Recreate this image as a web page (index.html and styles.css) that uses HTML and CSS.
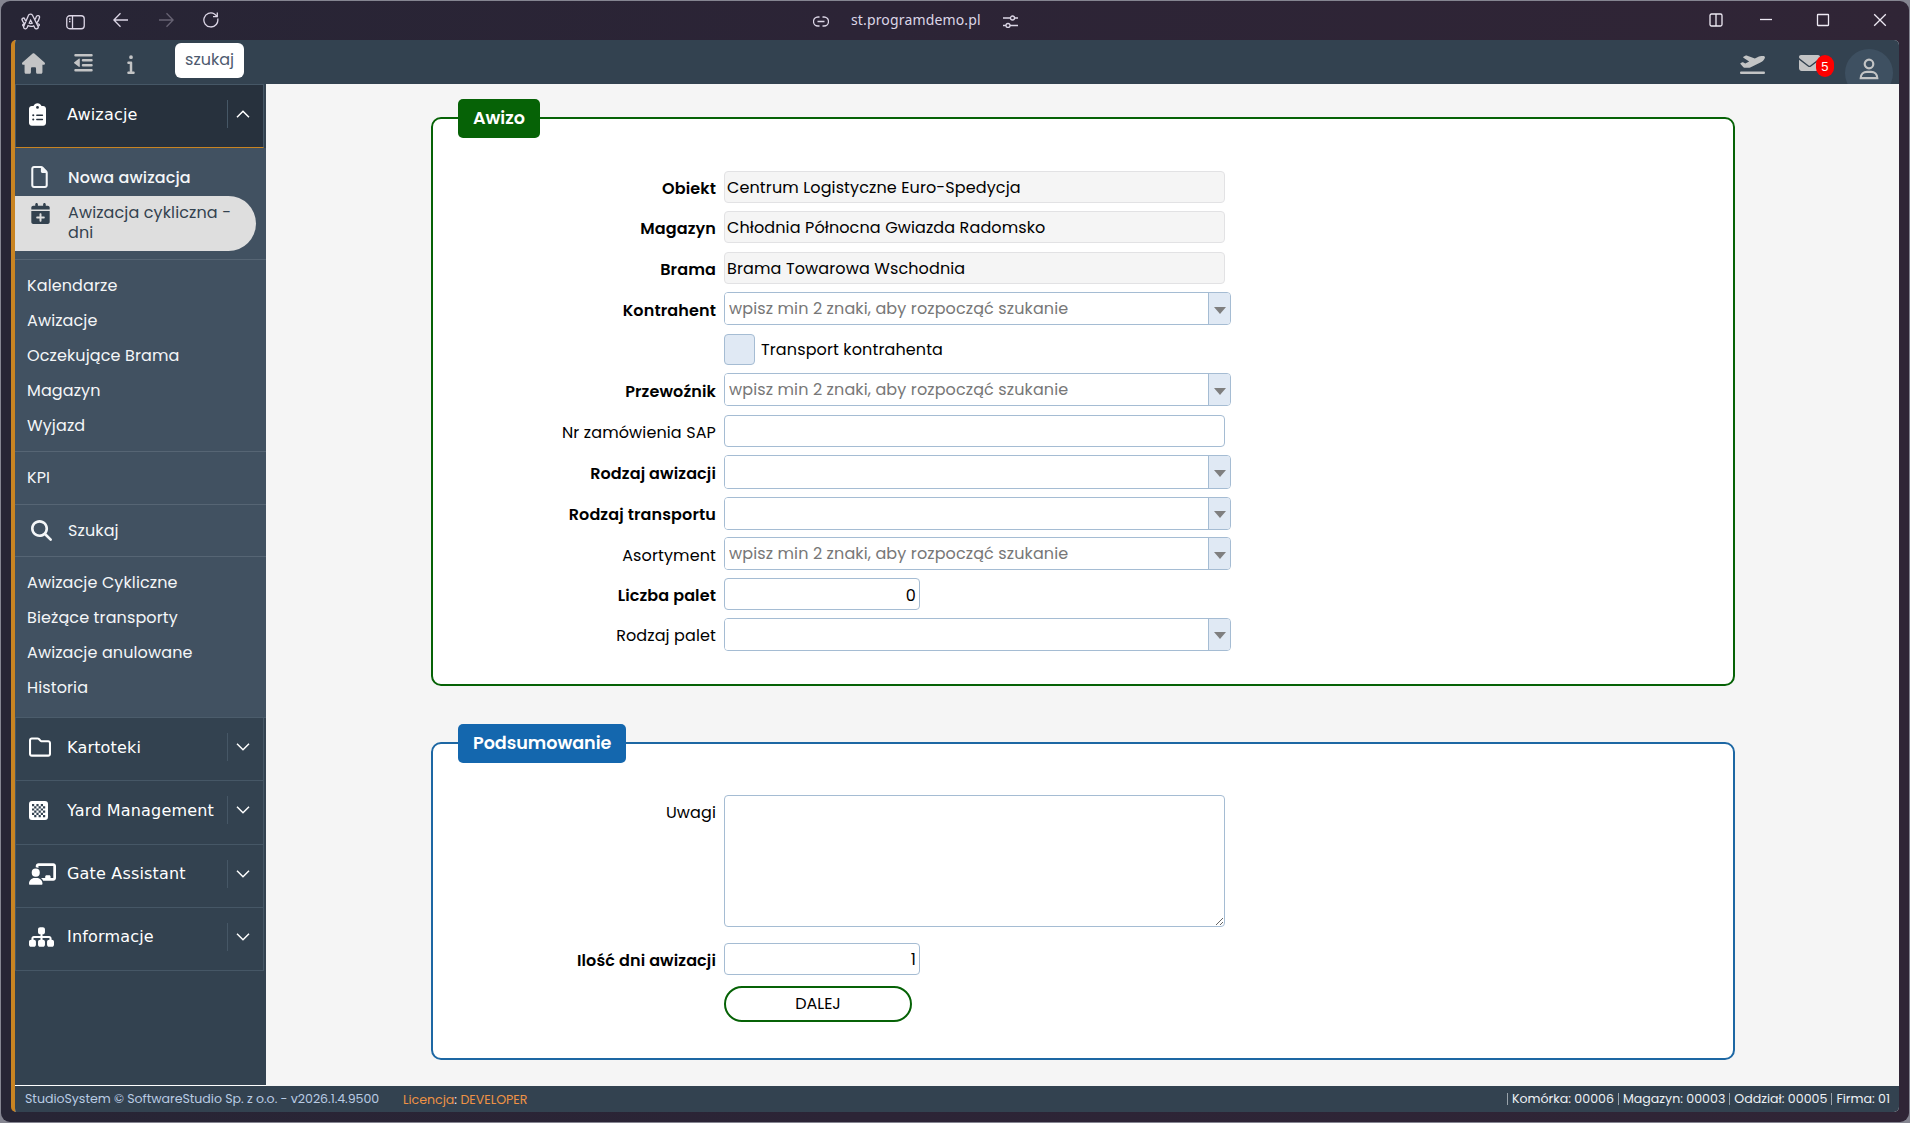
FILE: index.html
```html
<!DOCTYPE html>
<html lang="pl">
<head>
    <meta charset="UTF-8">
    <meta name="viewport" content="width=device-width, initial-scale=1.0">
    <title>Awizacja cykliczna</title>
    <link rel="stylesheet" href="styles.css">
</head>
<body>
    <div class="window">
        <div class="titlebar">
            <div class="tb-left">
                <svg class="i-arc" viewBox="0 0 20 17"><path d="M7.500 2.200C8 .7 10.700.7 11.500 2.200L17 13.200C18 15.500 15 17 13.700 14.800L12.700 12.800C11 13.600 9 13.600 7 12.700L6.200 14.500C5 17 2 15.700 2.800 13.300ZM5.300 8.500C4.500 7.800 4 7 3.700 6C3 4.200.600 5 1 6.800C1.500 8.500 2.600 10 4 11.200M13.500 7C14.400 6 15 5 15.200 3.800C15.700 2 19 2.300 18.500 4.500C18 7 17 9 15.300 10.400M8.200 10.200L9.600 7.200L11.200 10.200C10.200 10.700 9.200 10.700 8.200 10.200ZM4 11.200C2 10.500.600 12.500 2.800 13.300M16 11C18 10.500 19.300 12 17.500 13"/></svg>
                <svg class="i-panel" viewBox="0 0 19 15"><rect x=".75" y=".75" width="17.500" height="13" rx="3"/><path d="M6.500 1v12.500M3 4h1.500M3 6.500h1.500"/></svg>
                <svg class="i-back" viewBox="0 0 16 16"><path d="M15 8H1M7.500 1.300L.900 8l6.600 6.700"/></svg>
                <svg class="i-fwd" viewBox="0 0 16 16"><path d="M1 8h14M8.500 1.300L15.100 8l-6.600 6.700"/></svg>
                <svg class="i-reload" viewBox="0 0 16 16"><path d="M14.700 6.500A7 7 0 1 1 11.500 2L14 4.200M14.300.500v4.200H10"/></svg>
            </div>
            <div class="tb-url">
                <svg class="i-link" viewBox="0 0 16 11"><path d="M6.500 1H5a4.400 4.400 0 0 0 0 9h1.500M9.500 1H11a4.400 4.400 0 0 1 0 9H9.500M4.500 5.500h7"/></svg>
                <span>st.programdemo.pl</span>
                <svg class="i-tune" viewBox="0 0 15 13"><path d="M0 3h7.500M11.500 3H15M0 10.500h3M7 10.500h8"/><circle cx="9.500" cy="3" r="2"/><circle cx="5" cy="10.500" r="2"/></svg>
            </div>
            <div class="tb-right">
                <svg class="i-split" viewBox="0 0 14 14"><rect x="1" y="1" width="12" height="12" rx="1.500"/><path d="M7 1v12"/></svg>
                <svg viewBox="0 0 14 14"><path d="M1 6.500h12"/></svg>
                <svg viewBox="0 0 14 14"><rect x="1.500" y="1.500" width="11" height="11" rx=".5"/></svg>
                <svg viewBox="0 0 14 14"><path d="M1.200 1.200l11.600 11.600M12.800 1.200L1.200 12.800"/></svg>
            </div>
        </div>

        <div class="app">
            <header class="topbar">
                <svg class="i-home" viewBox="0 0 576 512"><path d="M575.8 255.5c0 18-15 32.1-32 32.1h-32l.7 160.2c0 2.700-.2 5.400-.5 8.100V472c0 22.100-17.900 40-40 40H392c-22.100 0-40-17.900-40-40V384c0-17.700-14.300-32-32-32H256c-17.700 0-32 14.300-32 32v88c0 22.100-17.900 40-40 40H104c-22.100 0-40-17.900-40-40V287.600H32c-18 0-32-14-32-32.100c0-9 3-17 10-24L266.400 8c7-7 15-8 22-8s15 2 21 7L564.800 231.500c8 7 12 15 11 24z"/></svg>
                <svg class="i-outdent" viewBox="0 0 19 20"><path d="M1.500 1h16a1.200 1.200 0 0 1 0 2.500h-16A1.200 1.200 0 0 1 1.500 1zM9 6h8.500a1.200 1.200 0 0 1 0 2.500H9A1.200 1.200 0 0 1 9 6zM9 11h8.500a1.200 1.200 0 0 1 0 2.500H9A1.200 1.200 0 0 1 9 11zM1.500 16h16a1.200 1.200 0 0 1 0 2.500h-16a1.200 1.200 0 0 1 0-2.500zM.300 9.200L4.800 5.700c.5-.4 1-.1 1 .5v7c0 .6-.5.900-1 .5L.300 10.300a.7.7 0 0 1 0-1.100z"/></svg>
                <svg class="i-info" viewBox="0 0 192 512"><path d="M48 80a48 48 0 1 1 96 0A48 48 0 1 1 48 80zM0 224c0-17.700 14.300-32 32-32H96c17.700 0 32 14.300 32 32V448h32c17.700 0 32 14.300 32 32s-14.300 32-32 32H32c-17.700 0-32-14.300-32-32s14.300-32 32-32H64V256H32c-17.700 0-32-14.300-32-32z"/></svg>
                <button class="search" type="button">szukaj</button>
                <div class="top-right">
                    <svg class="i-plane" viewBox="0 0 640 512"><path d="M381 114.900L186.100 41.800c-16.700-6.200-35.200-5.300-51.100 2.700L89.100 67.400C78 73 77.200 88.500 87.600 95.200l146.900 94.500L136 240 77.800 214.100c-8.700-3.900-18.800-3.700-27.300 .6L18.300 230.800c-9.300 4.700-11.800 16.800-5 24.700l73.100 85.300c6.100 7.100 15 11.200 24.300 11.200H248.400c5 0 9.900-1.200 14.300-3.400L535.600 212.200c46.500-23.300 82.500-63.300 100.800-112C645.900 75 627.200 48 600.200 48H542.800c-20.200 0-40.200 4.800-58.200 14L381 114.900zM0 480c0 17.700 14.300 32 32 32H608c17.700 0 32-14.300 32-32s-14.300-32-32-32H32c-17.700 0-32 14.300-32 32z"/></svg>
                    <div class="mail">
                        <svg class="i-mail" viewBox="0 64 512 384" preserveAspectRatio="none"><path d="M48 64C21.500 64 0 85.500 0 112c0 15.100 7.100 29.300 19.200 38.400L236.800 313.600c11.400 8.500 27 8.500 38.400 0L492.800 150.400c12.100-9.100 19.200-23.300 19.200-38.400c0-26.500-21.500-48-48-48H48zM0 176V384c0 35.300 28.700 64 64 64H448c35.300 0 64-28.700 64-64V176L294.400 339.200c-22.800 17.100-54 17.100-76.800 0L0 176z"/></svg>
                        <span class="badge">5</span>
                    </div>
                    <div class="avatar">
                        <svg viewBox="0 0 20 22"><circle cx="10" cy="6" r="4.300"/><path d="M1.700 20.200c0-4 2.800-6.400 6.300-6.400h4c3.500 0 6.300 2.400 6.300 6.400z"/></svg>
                    </div>
                </div>
            </header>

            <div class="body">
                <nav class="sidebar">
                    <div class="group open">
                        <svg class="i-clip" viewBox="0 0 384 512"><path d="M192 0c-41.800 0-77.400 26.700-90.500 64H64C28.700 64 0 92.700 0 128V448c0 35.300 28.700 64 64 64H320c35.300 0 64-28.700 64-64V128c0-35.300-28.700-64-64-64H282.500C269.400 26.700 233.800 0 192 0zm0 64a32 32 0 1 1 0 64 32 32 0 1 1 0-64zM72 272a24 24 0 1 1 48 0 24 24 0 1 1 -48 0zm104-16H304c8.800 0 16 7.200 16 16s-7.200 16-16 16H176c-8.800 0-16-7.200-16-16s7.200-16 16-16zM72 368a24 24 0 1 1 48 0 24 24 0 1 1 -48 0zm88 0c0-8.800 7.200-16 16-16H304c8.800 0 16 7.200 16 16s-7.200 16-16 16H176c-8.800 0-16-7.200-16-16z"/></svg>
                        <span>Awizacje</span>
                        <i><svg viewBox="0 0 14 8"><path d="M1 7.300l6-6 6 6"/></svg></i>
                    </div>
                    <div class="submenu">
                        <div class="section with-icons">
                            <a class="item">
                                <svg class="i-file" viewBox="0 0 384 512"><path d="M320 464c8.800 0 16-7.200 16-16V160H256c-17.700 0-32-14.300-32-32V48H64c-8.800 0-16 7.200-16 16V448c0 8.800 7.200 16 16 16H320zM0 64C0 28.700 28.700 0 64 0H229.500c17 0 33.300 6.700 45.300 18.700l90.500 90.500c12 12 18.700 28.300 18.700 45.300V448c0 35.300-28.700 64-64 64H64c-35.300 0-64-28.700-64-64V64z"/></svg>
                                <span>Nowa awizacja</span>
                            </a>
                            <a class="item selected">
                                <svg class="i-cal" viewBox="0 0 448 512"><path d="M96 32V64H48C21.500 64 0 85.500 0 112v48H448V112c0-26.500-21.500-48-48-48H352V32c0-17.700-14.300-32-32-32s-32 14.300-32 32V64H160V32c0-17.700-14.300-32-32-32S96 14.300 96 32zM448 192H0V464c0 26.500 21.500 48 48 48H400c26.500 0 48-21.500 48-48V192zM224 248c13.300 0 24 10.700 24 24v56h56c13.300 0 24 10.700 24 24s-10.700 24-24 24H248v56c0 13.300-10.700 24-24 24s-24-10.700-24-24V376H144c-13.300 0-24-10.700-24-24s10.700-24 24-24h56V272c0-13.300 10.700-24 24-24z"/></svg>
                                <span>Awizacja cykliczna - dni</span>
                            </a>
                        </div>
                        <div class="section links">
                            <a>Kalendarze</a>
                            <a>Awizacje</a>
                            <a>Oczekujące Brama</a>
                            <a>Magazyn</a>
                            <a>Wyjazd</a>
                        </div>
                        <div class="section single"><a>KPI</a></div>
                        <div class="section single">
                            <a class="item">
                                <svg class="i-search" viewBox="0 0 512 512"><path d="M416 208c0 45.900-14.900 88.300-40 122.700L502.600 457.400c12.500 12.500 12.500 32.800 0 45.300s-32.800 12.500-45.300 0L330.700 376c-34.400 25.200-76.800 40-122.700 40C93.100 416 0 322.900 0 208S93.100 0 208 0S416 93.100 416 208zM208 352a144 144 0 1 0 0-288 144 144 0 1 0 0 288z"/></svg>
                                <span>Szukaj</span>
                            </a>
                        </div>
                        <div class="section links last">
                            <a>Awizacje Cykliczne</a>
                            <a>Bieżące transporty</a>
                            <a>Awizacje anulowane</a>
                            <a>Historia</a>
                        </div>
                    </div>
                    <div class="group">
                        <svg class="i-folder" viewBox="0 32 512 448"><path d="M0 96C0 60.700 28.700 32 64 32H196.100c19.100 0 37.400 7.600 50.900 21.100L289.900 96H448c35.300 0 64 28.700 64 64V416c0 35.300-28.700 64-64 64H64c-35.300 0-64-28.700-64-64V96zM64 80c-8.800 0-16 7.200-16 16V416c0 8.800 7.200 16 16 16H448c8.800 0 16-7.200 16-16V160c0-8.800-7.200-16-16-16H286.600c-10.600 0-20.800-4.200-28.300-11.700L213.100 87c-4.500-4.500-10.600-7-17-7H64z"/></svg>
                        <span>Kartoteki</span>
                        <i><svg viewBox="0 0 14 8"><path d="M1 .7l6 6 6-6"/></svg></i>
                    </div>
                    <div class="group">
                        <svg class="i-board" viewBox="0 0 19 19"><path fill-rule="evenodd" d="M3 0h13a3 3 0 0 1 3 3v13a3 3 0 0 1-3 3H3a3 3 0 0 1-3-3V3a3 3 0 0 1 3-3zM3 3h2.200v2.200H3zM7.400 3h2.200v2.200H7.400zM11.800 3h2.200v2.200h-2.200zM5.200 5.200h2.200v2.200H5.200zM9.600 5.200h2.200v2.200H9.600zM14 5.200h2.200v2.200H14zM3 7.400h2.200v2.200H3zM7.400 7.400h2.200v2.200H7.400zM11.800 7.400h2.200v2.200h-2.200zM5.200 9.600h2.200v2.200H5.200zM9.600 9.600h2.200v2.200H9.600zM14 9.600h2.200v2.200H14zM3 11.800h2.200v2.200H3zM7.400 11.800h2.200v2.200H7.400zM11.800 11.800h2.200v2.200h-2.200zM5.200 14h2.200v2.200H5.200zM9.600 14h2.200v2.200H9.600zM14 14h2.200v2.200H14z"/></svg>
                        <span>Yard Management</span>
                        <i><svg viewBox="0 0 14 8"><path d="M1 .7l6 6 6-6"/></svg></i>
                    </div>
                    <div class="group">
                        <svg class="i-gate" viewBox="0 0 640 512"><path d="M160 64c0-35.300 28.700-64 64-64H576c35.300 0 64 28.700 64 64V352c0 35.300-28.700 64-64 64H336.800c-11.800-25.500-29.900-47.500-52.400-64H384V320c0-17.700 14.300-32 32-32h64c17.700 0 32 14.300 32 32v32h64V64L224 64v49.100C205.200 102.200 183.300 96 160 96V64zm0 64a96 96 0 1 1 0 192 96 96 0 1 1 0-192zM133.300 352h53.300C260.300 352 320 411.700 320 485.300c0 14.700-11.900 26.700-26.700 26.700H26.700C11.900 512 0 500.100 0 485.300C0 411.700 59.700 352 133.300 352z"/></svg>
                        <span>Gate Assistant</span>
                        <i><svg viewBox="0 0 14 8"><path d="M1 .7l6 6 6-6"/></svg></i>
                    </div>
                    <div class="group">
                        <svg class="i-gate i-sitemap" viewBox="0 32 576 448"><path d="M208 80c0-26.500 21.500-48 48-48h64c26.500 0 48 21.500 48 48v64c0 26.500-21.500 48-48 48h-8v40H464c30.900 0 56 25.100 56 56v32h8c26.500 0 48 21.500 48 48v64c0 26.500-21.500 48-48 48H464c-26.500 0-48-21.500-48-48V368c0-26.500 21.500-48 48-48h8V288c0-4.400-3.600-8-8-8H312v40h8c26.500 0 48 21.500 48 48v64c0 26.500-21.500 48-48 48H256c-26.500 0-48-21.500-48-48V368c0-26.500 21.500-48 48-48h8V280H112c-4.400 0-8 3.600-8 8v32h8c26.500 0 48 21.500 48 48v64c0 26.500-21.500 48-48 48H48c-26.500 0-48-21.500-48-48V368c0-26.500 21.500-48 48-48h8V288c0-30.900 25.100-56 56-56H264V192h-8c-26.500 0-48-21.500-48-48V80z"/></svg>
                        <span>Informacje</span>
                        <i><svg viewBox="0 0 14 8"><path d="M1 .7l6 6 6-6"/></svg></i>
                    </div>
                </nav>

                <main class="content">
                    <fieldset class="card green">
                        <legend>Awizo</legend>
                        <div class="row">
                            <label class="req" for="obiekt">Obiekt</label>
                            <input class="field" type="text" id="obiekt" value="Centrum Logistyczne Euro-Spedycja" readonly>
                        </div>
                        <div class="row">
                            <label class="req" for="magazyn">Magazyn</label>
                            <input class="field" type="text" id="magazyn" value="Chłodnia Północna Gwiazda Radomsko" readonly>
                        </div>
                        <div class="row">
                            <label class="req" for="brama">Brama</label>
                            <input class="field" type="text" id="brama" value="Brama Towarowa Wschodnia" readonly>
                        </div>
                        <div class="row">
                            <label class="req" for="kontrahent">Kontrahent</label>
                            <div class="combo"><input type="text" id="kontrahent" placeholder="wpisz min 2 znaki, aby rozpocząć szukanie"><b></b></div>
                        </div>
                        <div class="row">
                            <span></span>
                            <label class="check"><input type="checkbox"> Transport kontrahenta</label>
                        </div>
                        <div class="row">
                            <label class="req" for="przewoznik">Przewoźnik</label>
                            <div class="combo"><input type="text" id="przewoznik" placeholder="wpisz min 2 znaki, aby rozpocząć szukanie"><b></b></div>
                        </div>
                        <div class="row">
                            <label for="sap">Nr zamówienia SAP</label>
                            <input class="field" type="text" id="sap">
                        </div>
                        <div class="row">
                            <label class="req" for="rodzajAwizacji">Rodzaj awizacji</label>
                            <div class="combo tall"><input type="text" id="rodzajAwizacji"><b></b></div>
                        </div>
                        <div class="row">
                            <label class="req" for="rodzajTransportu">Rodzaj transportu</label>
                            <div class="combo"><input type="text" id="rodzajTransportu"><b></b></div>
                        </div>
                        <div class="row">
                            <label for="asortyment">Asortyment</label>
                            <div class="combo"><input type="text" id="asortyment" placeholder="wpisz min 2 znaki, aby rozpocząć szukanie"><b></b></div>
                        </div>
                        <div class="row">
                            <label class="req" for="liczbaPalet">Liczba palet</label>
                            <input class="field number" type="text" id="liczbaPalet" value="0">
                        </div>
                        <div class="row">
                            <label for="rodzajPalet">Rodzaj palet</label>
                            <div class="combo"><input type="text" id="rodzajPalet"><b></b></div>
                        </div>
                    </fieldset>

                    <fieldset class="card blue">
                        <legend>Podsumowanie</legend>
                        <div class="row notes">
                            <label for="uwagi">Uwagi</label>
                            <textarea class="field" id="uwagi"></textarea>
                        </div>
                        <div class="row days">
                            <label class="req" for="dni">Ilość dni awizacji</label>
                            <input class="field number" type="text" id="dni" value="1">
                        </div>
                        <div class="row">
                            <span></span>
                            <button class="next" type="button">DALEJ</button>
                        </div>
                    </fieldset>
                </main>
            </div>

            <footer class="footer">
                <span class="version">StudioSystem © SoftwareStudio Sp. z o.o. - v2026.1.4.9500</span>
                <span class="licence">Licencja<em>:</em> DEVELOPER</span>
                <span class="codes"><s></s>Komórka: 00006 <s></s>Magazyn: 00003 <s></s>Oddział: 00005 <s></s>Firma: 01</span>
            </footer>
        </div>
    </div>
</body>
</html>
```
FILE: styles.css
```css
* {
    box-sizing: border-box;
}
body {
    margin: 0;
    height: 100vh;
    padding: 1px;
    background-color: #858591;
    font-family: Poppins, Inter, sans-serif;
    font-size: 16px;
    letter-spacing: 0.12px;
    color: #000;
    overflow: hidden;
}
svg {
    display: block;
    flex: none;
}
.window {
    height: 100%;
    display: flex;
    flex-direction: column;
    padding: 0 10px 10px;
    border-radius: 9px;
    background: linear-gradient(90deg, #272535, #2c2436 45%, #302536);
}

/* browser bar */
.titlebar {
    height: 39px;
    flex: none;
    display: grid;
    grid-template-columns: 802px 1fr auto;
    color: #dcd6e6;
}
.titlebar svg {
    fill: none;
    stroke: currentColor;
    stroke-width: 1.3;
}
.tb-left,
.tb-url,
.tb-right {
    display: flex;
    align-items: center;
    padding-bottom: 1px;
}
.tb-left {
    padding-left: 10px;
}
.tb-left .i-arc {
    width: 20px;
    height: 17px;
    margin: 3px 25px 0 0;
}
.tb-left .i-panel {
    width: 19px;
    height: 15px;
    margin: 4px 28px 0 0;
}
.i-back,
.i-fwd,
.i-reload {
    width: 16px;
    height: 16px;
    margin-right: 29px;
}
.i-fwd {
    opacity: 0.35;
}
.tb-url span {
    width: 130px;
    margin: 0 22px;
    padding-bottom: 2px;
    font-family: "Noto Sans", sans-serif;
    font-size: 14px;
    letter-spacing: 0.15px;
    white-space: nowrap;
}
.i-link {
    width: 16px;
    height: 11px;
    margin-top: 2px;
}
.i-tune {
    width: 15px;
    height: 13px;
    margin-top: 2px;
}
.tb-right {
    gap: 43px;
    padding-right: 12px;
    color: #eeeaf4;
}
.tb-right svg {
    width: 14px;
    height: 14px;
    margin-bottom: 1px;
}
.tb-right .i-split {
    margin: 0 -7px 0 0;
}

/* application frame */
.app {
    flex: 1;
    min-height: 0;
    display: flex;
    flex-direction: column;
    border-left: 4px solid #c98422;
    border-radius: 5px;
    overflow: hidden;
    background-color: #f5f5f5;
}
.topbar {
    height: 44px;
    flex: none;
    display: flex;
    align-items: center;
    padding-left: 7px;
    background-color: #334250;
    overflow: hidden;
}
.topbar svg {
    fill: #c3c4c5;
}
.i-home {
    width: 23px;
    height: 21px;
    margin-top: 2px;
}
.i-outdent {
    width: 19px;
    height: 20px;
    margin: 2px 0 0 29px;
}
.i-info {
    width: 8px;
    height: 20px;
    margin: 3px 0 0 34px;
}
.search {
    width: 69px;
    height: 35px;
    margin: -3px 0 0 40px;
    padding: 0 0 2px;
    border: none;
    border-radius: 6px;
    background-color: #fff;
    color: #4d5a6e;
    font: 16px Poppins, Inter, sans-serif;
    text-align: center;
}
.top-right {
    display: flex;
    margin-left: auto;
    align-self: flex-start;
}
.i-plane {
    width: 25px;
    height: 20px;
    margin-top: 14px;
}
.mail {
    display: flex;
    width: 36px;
    margin-left: 34px;
}
.i-mail {
    width: 21px;
    height: 16px;
    margin-top: 15px;
}
.badge {
    position: relative;
    width: 18px;
    height: 22px;
    margin: 15px 0 0 -4px;
    border-radius: 9px;
    background-color: #f00;
    color: #fff;
    font: 13px/23px "Liberation Sans", sans-serif;
    text-align: center;
}
.avatar {
    width: 48px;
    height: 48px;
    display: flex;
    justify-content: center;
    align-items: center;
    margin: 9px 6px 0 10px;
    padding-bottom: 8px;
    border-radius: 50%;
    background-color: #3e5061;
}
.avatar svg {
    width: 20px;
    height: 22px;
    margin-bottom: 1px;
    fill: none;
    stroke: #c3c4c5;
    stroke-width: 2.2;
}
.body {
    flex: 1;
    min-height: 0;
    display: flex;
}

/* side menu */
.sidebar {
    width: 251px;
    flex: none;
    display: flex;
    flex-direction: column;
    background-color: #334250;
    border-bottom: 1px solid #fff;
    color: #f4f6f8;
}
.sidebar svg {
    fill: currentColor;
}
.group {
    width: 249px;
    height: 63.25px;
    flex: none;
    display: flex;
    align-items: center;
    padding: 0 13px 4px 13px;
    border: 1px solid #465766;
    border-top: none;
    font-family: Verdana, "DejaVu Sans", sans-serif;
    letter-spacing: 0.18px;
    color: #fff;
}
.group.open {
    height: 64px;
    background-color: #27313d;
    border-top: 1px solid #465766;
    border-bottom: 1px solid #c98422;
}
.group span {
    flex: 1;
    white-space: nowrap;
}
.group > svg {
    margin-right: 17px;
}
.group i {
    height: 28px;
    display: flex;
    align-items: center;
    padding-left: 8px;
    border-left: 1px solid #465766;
}
.group i svg {
    width: 14px;
    height: 8px;
    fill: none;
    stroke: #fff;
    stroke-width: 1.5;
}
.group .i-clip {
    width: 17px;
    height: 23px;
    margin-right: 21px;
}
.group .i-folder {
    width: 22px;
    height: 20px;
    margin-right: 16px;
}
.group .i-board {
    width: 19px;
    height: 19px;
    margin-right: 19px;
}
.group .i-gate {
    width: 27px;
    height: 22px;
    margin-right: 11px;
}
.group .i-sitemap {
    width: 25px;
    height: 20px;
    margin-right: 13px;
}
.submenu {
    height: 570px;
    flex: none;
    background-color: #415161;
    border-bottom: 1px solid #4b5c6b;
}
.section {
    border-bottom: 1px solid #566574;
}
.item {
    display: flex;
}
.with-icons {
    padding-top: 10px;
    height: 112px;
}
.with-icons .item {
    height: 38px;
    align-items: center;
    padding-left: 16px;
    font-weight: 500;
}
.with-icons .item.selected {
    width: 241px;
    height: 55px;
    align-items: flex-start;
    padding: 7px 20px 0 16px;
    border-radius: 0 28px 28px 0;
    background-color: #dedede;
    color: #33424f;
    font-weight: 400;
    line-height: 20px;
}
.i-file {
    width: 17px;
    height: 22px;
    margin-right: 20px;
}
.i-cal {
    width: 19px;
    height: 21px;
    margin-right: 18px;
}
.links {
    height: 192px;
    padding-top: 8px;
}
.links a {
    display: block;
    padding-left: 12px;
    line-height: 35px;
}
.links.last {
    height: auto;
    border: none;
}
.single {
    height: 52.5px;
    padding-left: 12px;
    line-height: 51px;
}
.single .item {
    align-items: center;
    padding-left: 4px;
}
.i-search {
    width: 21px;
    height: 21px;
    margin-right: 16px;
}

/* form */
.content {
    flex: 1;
    padding: 15px 164px 0 165px;
    background-color: #f5f5f5;
}
.card {
    height: 587px;
    margin: 0 0 38px;
    padding: 33px 25px 0;
    border: 2px solid #066206;
    border-radius: 10px;
    background-color: #fff;
}
.card legend {
    height: 38.5px;
    padding: 0 15px;
    border-radius: 5px;
    background-color: #066206;
    color: #fff;
    font-size: 17.6px;
    font-weight: 600;
    line-height: 38px;
    letter-spacing: -0.05px;
}
.blue {
    height: 336px;
    padding-top: 32px;
    border-color: #1d67a3;
}
.blue legend {
    background-color: #1467ae;
}
.row {
    display: grid;
    grid-template-columns: 258px auto;
    column-gap: 8px;
    align-items: center;
    justify-content: start;
    margin-bottom: 7.7px;
}
.green .row:nth-of-type(-n+7) {
    margin-bottom: 8.5px;
}
.row > label {
    text-align: right;
    padding-top: 3px;
}
.row > .req {
    font-weight: 600;
}
.field,
.combo {
    width: 501px;
    height: 32px;
    border: 1px solid #a5bcd3;
    border-radius: 4px;
    background-color: #fff;
}
.field {
    padding: 1px 2px 0;
    font: 16px Poppins, Inter, sans-serif;
    letter-spacing: 0.12px;
    color: #000;
    outline: none;
}
.field:read-only {
    border-color: #e2e2e4;
    background-color: #f5f5f5;
}
.number {
    width: 196px;
    padding: 2px 3px 0;
    text-align: right;
}
.combo {
    width: 507px;
    height: 33px;
    display: flex;
    overflow: hidden;
}
.combo.tall {
    height: 34px;
}
.combo input {
    flex: 1;
    padding: 0 4px;
    border: none;
    outline: none;
    font: 16px Poppins, Inter, sans-serif;
    letter-spacing: 0.12px;
}
.combo input::placeholder {
    color: #777;
}
.combo b {
    width: 22px;
    display: flex;
    justify-content: center;
    align-items: center;
    padding-top: 3px;
    border-left: 1px solid #a5bcd3;
    background-color: #e0e9f4;
}
.combo b::after {
    content: "";
    border: 6px solid transparent;
    border-top: 7px solid #7f7f7f;
    border-bottom: none;
}
.row > .check {
    display: flex;
    align-items: center;
    gap: 6px;
    padding-top: 0;
}
.check input {
    appearance: none;
    width: 31px;
    height: 31px;
    margin: 0;
    border: 1px solid #a5bcd3;
    border-radius: 4px;
    background-color: #e0e9f4;
}
.notes {
    align-items: start;
    margin-bottom: 16px;
}
.row.notes > label {
    padding-top: 5px;
}
.notes textarea {
    height: 132px;
}
.days {
    margin-bottom: 11px;
}
.next {
    width: 188px;
    height: 36px;
    padding: 0 0 1px;
    border: 2px solid #066206;
    border-radius: 18px;
    background-color: #fff;
    color: #000;
    font: 16px Poppins, Inter, sans-serif;
}

/* status line */
.footer {
    height: 26px;
    flex: none;
    display: flex;
    align-items: center;
    padding: 0 9px 0 10px;
    background-color: #334250;
    font-size: 12.6px;
    letter-spacing: 0;
    white-space: nowrap;
}
.version {
    width: 378px;
    color: #b9cbe3;
    letter-spacing: -0.04px;
}
.licence {
    padding-top: 2px;
    color: #ee9245;
}
.licence em {
    color: #edf1f5;
    font-style: normal;
}
.codes {
    display: flex;
    align-items: center;
    gap: 4px;
    margin-left: auto;
    color: #edf1f5;
}
.codes s {
    width: 1px;
    height: 12px;
    background-color: #9aa3ab;
}
```
